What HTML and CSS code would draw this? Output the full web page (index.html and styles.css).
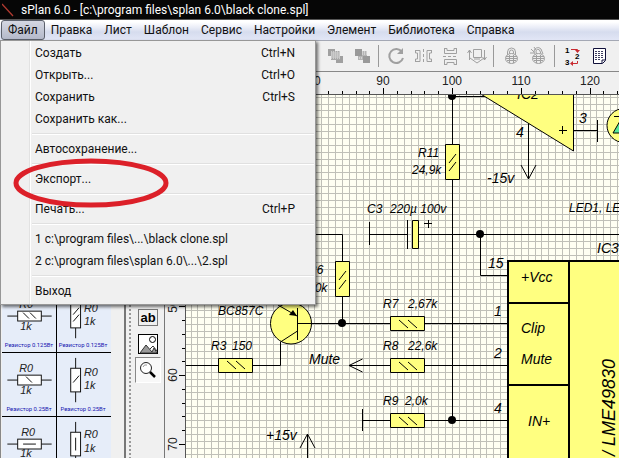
FILE: index.html
```html
<!DOCTYPE html>
<html lang="ru">
<head>
<meta charset="utf-8">
<title>sPlan 6.0</title>
<link rel="stylesheet" href="styles.css">
</head>
<body>
<header class="titlebar">
  <svg class="app-icon" width="16" height="18" viewBox="0 0 16 18"><path d="M0 3L11 15" stroke="#b03a30" stroke-width="1.3"/></svg>
  <span>sPlan 6.0 - [c:\program files\splan 6.0\black clone.spl]</span>
</header>
<nav class="menubar">
  <button class="menu-title open">Файл</button>
  <button class="menu-title">Правка</button>
  <button class="menu-title">Лист</button>
  <button class="menu-title">Шаблон</button>
  <button class="menu-title">Сервис</button>
  <button class="menu-title">Настройки</button>
  <button class="menu-title">Элемент</button>
  <button class="menu-title">Библиотека</button>
  <button class="menu-title">Справка</button>

  <div class="dropdown">
    <button class="item"><span>Создать</span><span class="key">Ctrl+N</span></button>
    <button class="item"><span>Открыть...</span><span class="key">Ctrl+O</span></button>
    <button class="item"><span>Сохранить</span><span class="key">Ctrl+S</span></button>
    <button class="item"><span>Сохранить как...</span></button>
    <hr>
    <button class="item"><span>Автосохранение...</span></button>
    <hr>
    <button class="item"><span>Экспорт...</span></button>
    <hr>
    <button class="item"><span>Печать...</span><span class="key">Ctrl+P</span></button>
    <hr>
    <button class="item"><span>1 c:\program files\...\black clone.spl</span></button>
    <button class="item"><span>2 c:\program files\splan 6.0\...\2.spl</span></button>
    <hr>
    <button class="item"><span>Выход</span></button>
    <svg class="marker" width="156" height="50" viewBox="0 0 156 50"><ellipse cx="78" cy="25" rx="75" ry="22" fill="none" stroke="#dc2029" stroke-width="5"/></svg>
  </div>
</nav>

<div class="toolbar">
  <button class="tool" aria-label="На передний план"><svg width="20" height="20" viewBox="0 0 20 20"><path d="M3 3h7v7H3zM11 10h7v7h-7z" fill="#a0a0a0"/><path d="M6 5h9v9H6z" fill="#a8a8a8"/><path d="M6 6h9M6 8h9M6 10h9M6 12h9" stroke="#eee" stroke-dasharray="1 1"/><path d="M6 7h9M6 9h9M6 11h9" stroke="#eee" stroke-dasharray="1 1" stroke-dashoffset="1" opacity=".6"/></svg></button>
  <button class="tool" aria-label="На задний план"><svg width="20" height="20" viewBox="0 0 20 20"><path d="M6 5h9v9H6z" fill="#b4b4b4"/><path d="M7 12h4M10 6h5M10 8h5" stroke="#eee" stroke-dasharray="1 1"/><path d="M3 3h7v7H3zM11 10h7v7h-7z" fill="#999"/></svg></button>
  <i class="sep"></i>
  <button class="tool" aria-label="Повернуть"><svg width="20" height="20" viewBox="0 0 20 20" fill="none" stroke="#a0a0a0" stroke-width="2"><path d="M16 6A7 7 0 1 0 17 12"/><path d="M17 2v6h-6z" fill="#a0a0a0" stroke="none"/></svg></button>
  <button class="tool" aria-label="Отразить по горизонтали"><svg width="20" height="20" viewBox="0 0 20 20" fill="none" stroke="#a0a0a0"><path d="M10.500 3v14" stroke-dasharray="3 2"/><path d="M2 4.500h5v11H2M2.500 4v3h2v6h-2v3M19 4.500h-5v11h5M18.500 4v3h-2v6h2v3"/></svg></button>
  <button class="tool" aria-label="Отразить по вертикали"><svg width="20" height="20" viewBox="0 0 20 20" fill="none" stroke="#a0a0a0"><path d="M3 10.500h15" stroke-dasharray="3 2"/><path d="M4.500 2v5.500h12V2M4 2.500h3v2h7v-2h3M4.500 19v-5.500h12V19M4 18.500h3v-2h7v2h3"/></svg></button>
  <button class="tool" aria-label="Выровнять"><svg width="20" height="20" viewBox="0 0 20 20" fill="none" stroke="#a0a0a0"><path d="M6.500 3.500h8v8h-8z"/><path d="M2.500 14V4M.5 7l2-3 2 3M17.500 4v10M15.500 11l2 3 2-3M3 12l7 5 7-5M7 13h6"/></svg></button>
  <i class="sep"></i>
  <button class="tool" aria-label="Закрепить"><svg width="20" height="20" viewBox="0 0 20 20" fill="none" stroke="#a0a0a0"><path d="M6.500 9V6a4 4 0 0 1 8 0v3M8.500 9V6a2 2 0 0 1 4 0v3"/><ellipse cx="10.500" cy="12.500" rx="6" ry="5" fill="#eee"/><path d="M5 10.500h11M5 12.500h11M6 14.500h9M8.500 9v8M12.500 9v8"/></svg></button>
  <button class="tool" aria-label="Открепить"><svg width="20" height="20" viewBox="0 0 20 20" fill="none" stroke="#a0a0a0"><path d="M7.500 9L6 6a4 4 0 0 1 7-3l2 5M9 9L8 6a2 2 0 0 1 4-1l1 3M3 3l3 3M2 7h4M6 1l2 3"/><ellipse cx="10.500" cy="12.500" rx="6" ry="5" fill="#eee"/><path d="M5 10.500h11M5 12.500h11M6 14.500h9M8.500 9v8M12.500 9v8"/></svg></button>
  <i class="sep"></i>
  <button class="tool" aria-label="Нумерация"><svg class="numbering" width="20" height="20" viewBox="0 0 20 20" fill="none"><path d="M9 3.500h6.500V6M15.500 15v2.500H10" stroke="#c82a30"/><path d="M13 4h5l-2.500 3zM11 15v5l-3-2.500z" fill="#c82a30"/><text x="3" y="7" class="digit">1</text><text x="13" y="13" class="digit">2</text><text x="3" y="19" class="digit">3</text></svg></button>
  <button class="tool" aria-label="Спецификация"><svg width="20" height="20" viewBox="0 0 20 20" fill="none" stroke="#10103a"><path d="M4.500 2.500h12v12l-3 3h-9z" fill="#fff"/><path d="M6 5.500h9M6 7.500h9M6 9.500h9M6 11.500h9M6 13.500h6" stroke-dasharray="2 1" opacity=".8"/><path d="M13 17v-3h3"/></svg></button>
</div>

<main class="workspace">
  <aside class="library">
    <div class="blank-rows"></div>
    <svg class="part left" viewBox="0 0 54 64"><path d="M5 27.500h45"/><rect x="15.500" y="22.500" width="24" height="10"/><path d="M21 24l6 6M28 24l6 6"/><text x="17" y="19">R0</text><text x="18" y="42">1k</text><text class="caption" x="27" y="59">Резистор 0.125Вт</text></svg>
    <svg class="part" viewBox="0 0 54 64"><path d="M18.500 5v45"/><rect x="13.500" y="15.500" width="10" height="24"/><path d="M16 26l6-7M16 33l6-7"/><text x="27" y="23">R0</text><text x="27" y="37">1k</text><text class="caption" x="26" y="59">Резистор 0.125Вт</text></svg>
    <svg class="part left" viewBox="0 0 54 64"><path d="M5 27.500h45"/><rect x="15.500" y="22.500" width="24" height="10"/><path d="M24 24l6 6"/><text x="17" y="19">R0</text><text x="18" y="42">1k</text><text class="caption" x="27" y="59">Резистор 0.25Вт</text></svg>
    <svg class="part" viewBox="0 0 54 64"><path d="M18.500 5v45"/><rect x="13.500" y="15.500" width="10" height="24"/><path d="M16 30l6-7"/><text x="27" y="23">R0</text><text x="27" y="37">1k</text><text class="caption" x="26" y="59">Резистор 0.25Вт</text></svg>
    <svg class="part left" viewBox="0 0 54 64"><path d="M5 27.500h45"/><rect x="15.500" y="22.500" width="24" height="10"/><path d="M21 27.500h13"/><text x="19" y="19">R0</text><text x="18" y="41">1k</text></svg>
    <svg class="part" viewBox="0 0 54 64"><path d="M18.500 5v59"/><rect x="13.500" y="15.500" width="10" height="24"/><path d="M18.500 21v13"/><text x="27" y="21">R0</text><text x="27" y="36">1k</text></svg>
  </aside>
  <div class="palette">
    <button class="ptool first" aria-label="Текст"><svg width="20" height="18" viewBox="0 0 20 18"><rect x=".5" y=".5" width="19" height="16" fill="none" stroke="#000" stroke-dasharray="1 1"/><text x="10" y="13" class="ab">ab</text></svg></button>
    <button class="ptool" aria-label="Рисунок"><svg width="20" height="20" viewBox="0 0 20 20"><rect x=".5" y=".5" width="19" height="19" fill="#fff" stroke="#000"/><circle cx="14.500" cy="5.500" r="3" fill="#fff" stroke="#000"/><path d="M2 19l6-8 6 7 2-4 3 5z" fill="#999" stroke="#333"/><path d="M12 15l3-3 4 5" fill="none" stroke="#333"/></svg></button>
    <button class="ptool pressed" aria-label="Лупа"><svg width="20" height="20" viewBox="0 0 20 20"><circle cx="8" cy="8" r="5.500" fill="#fff" stroke="#222"/><path d="M5 7q1-3 4-2" stroke="#999" fill="none"/><path d="M12 12l5 5" stroke="#000" stroke-width="2.500"/></svg></button>
  </div>
  <div class="sheet">
    <svg class="ruler-top" id="rulerTop"></svg>
    <svg class="ruler-left" id="rulerLeft"></svg>
    <svg class="canvas">
      <g id="grid"></g>
      <g class="schematic" transform="translate(-186 -95)">
        <path class="wire" d="M452.500 90v330.500M452 96.500h33M528.500 123v56M521 165l7.500 14 7.500-14M573 130.500h24M597.500 120v22M315 234.500h27.500v89M369.500 222v23M369 234.500h38M407.500 220v29M418 234.500h240M480.500 234v41.500h27M297 323.500h210M349 365.500h158M362.500 359l-13.500 6.500 13.500 6.500M362 420.500h145M362.500 409v22M186 365.500h94.500V342M307.500 434v60M300 448l7.500-14 7.500 14M424 223.500h8M428.500 220v8"/>
        <path class="body" d="M484 96L470 88h103.500v63z"/>
        <path class="wire" d="M559 130.500h8M562.500 126v8"/>
        <circle class="body" cx="624" cy="125.500" r="17"/><path d="M613 133l7-12v12z" fill="#58e89a" stroke="#000"/><path class="wire" d="M614 116.500h8"/>
        <path class="body" d="M445.500 144.500h14v35h-14zM335.500 261.500h14v35h-14zM412.500 220.500h6v28h-6zM390.500 316.500h34v14h-34zM390.500 358.500h34v14h-34zM390.500 413.500h34v14h-34zM218.500 358.500h34v14h-34z"/>
        <path class="mark" d="M449 163l7-9M449 171l7-9M339 280l7-9M339 289l7-9M399 320l9 8M408 320l9 8M399 362l9 8M408 362l9 8M399 417l9 8M408 417l9 8M227 361l9 8M236 361l9 8"/>
        <circle class="body" cx="291" cy="323.500" r="20.500"/>
        <path class="wire" d="M297.500 308v32M297 323.500h45M278 305l19 11M280.500 342l17-11"/><path d="M297 316l-8-1 4-5z"/>
        <circle cx="452" cy="96" r="4"/><circle cx="480" cy="234" r="4"/><circle cx="342" cy="323" r="4"/><circle cx="452" cy="420" r="4"/>
        <path class="chip" d="M508 261h160v240H508zM569 261v240M508 303h61M508 385h61"/>
        <g class="small">
          <text x="418" y="157">R11</text><text x="412" y="174">24,9k</text>
          <text x="367" y="213">C3</text><text x="390" y="213">220µ 100v</text>
          <text x="308" y="274">R6</text><text x="308" y="292">10k</text>
          <text x="383" y="308">R7</text><text x="408" y="308">2,67k</text>
          <text x="383" y="350">R8</text><text x="408" y="350">22,6k</text>
          <text x="383" y="405">R9</text><text x="405" y="405">2,0k</text>
          <text x="218" y="315">BC857C</text><text x="211" y="350">R3</text><text x="232" y="350">150</text>
          <text x="569" y="212">LED1, LED2</text>
        </g>
        <g class="large">
          <text x="517" y="99">IC2</text><text x="516" y="137">4</text><text x="579" y="123">3</text><text x="487" y="183">-15v</text>
          <text x="597" y="253">IC3</text><text x="488" y="268">15</text><text x="494" y="316">1</text><text x="494" y="358">2</text><text x="494" y="413">4</text>
          <text x="521" y="282">+Vcc</text><text x="521" y="333">Clip</text><text x="521" y="364">Mute</text><text x="528" y="426">IN+</text>
          <text x="309" y="364">Mute</text><text x="266" y="440">+15v</text>
        </g>
        <text class="chip-name" transform="translate(615 456) rotate(-90)">/ LME49830</text>
      </g>
    </svg>
  </div>
</main>
<script src="script.js"></script>
</body>
</html>
```
FILE: styles.css
```css
* { box-sizing: border-box; }
html, body { height: 100%; margin: 0; }
body {
  display: flex;
  flex-direction: column;
  overflow: hidden;
  background: #f0f0f0;
  color: #111;
  font: 12px/16px Roboto, "Noto Sans", sans-serif;
}
button {
  margin: 0;
  padding: 0;
  border: 0;
  background: none;
  color: inherit;
  font: inherit;
}
svg { display: block; }

.titlebar {
  display: flex;
  align-items: center;
  flex: none;
  height: 20px;
  padding-left: 2px;
  gap: 3px;
  border-bottom: 1px solid #555;
  background: #060606;
  color: #fff;
  white-space: nowrap;
}

.menubar {
  position: relative;
  z-index: 2;
  display: flex;
  flex: none;
  height: 21px;
  padding-left: 1px;
  border-bottom: 1px solid #a4a8b4;
  background: linear-gradient(#fff 10%, #e8ebf6 40%, #d6dcee 60%, #e2e6f6);
}
.menu-title { padding: 0 6px; border: 1px solid transparent; border-width: 1px 0; white-space: nowrap; }
.menu-title.open {
  padding: 0 6px;
  border: 1px solid #5c616c;
  border-radius: 3px;
  background: linear-gradient(#d4d7e2, #b4b9ca);
}

.dropdown {
  position: absolute;
  top: 20px;
  left: 0;
  width: 316px;
  padding: 1px 1px 2px;
  border: 1px solid #979797;
  background: linear-gradient(90deg, #f0f0f0 28px, #e2e2e2 28px, #e2e2e2 29px, #fff 29px, #fff 30px, #f0f0f0 30px);
  box-shadow: 2px 2px 3px rgba(0, 0, 0, .55);
}
.item {
  display: flex;
  justify-content: space-between;
  align-items: center;
  width: 100%;
  height: 22px;
  padding: 0 19px 0 33px;
  white-space: nowrap;
}
.dropdown hr {
  height: 2px;
  margin: 3px 0 3px 30px;
  border: 0;
  border-top: 1px solid #e0e0e0;
  background: #fff;
}
.marker { position: absolute; top: 117px; left: 12px; }

.toolbar {
  display: flex;
  align-items: center;
  flex: none;
  height: 31px;
  padding-left: 321px;
  border-bottom: 1px solid #888;
  background: #f0f0f0;
}
.tool { display: flex; justify-content: center; align-items: center; width: 27px; height: 24px; }
.sep { flex: none; width: 1px; height: 22px; margin: 0 3px; background: #999; }
.numbering { overflow: visible; }
.digit { fill: #000; font: bold 8px "Liberation Sans", sans-serif; }

.workspace { display: flex; flex: 1; min-height: 0; overflow: hidden; }
.library {
  display: grid;
  grid-template-columns: 55px 54px;
  grid-auto-rows: 64px;
  flex: none;
  width: 126px;
  padding: 25px 0 0 1px;
  border-left: 1px solid #888;
  border-right: 2px solid #777;
  overflow: hidden;
}
.blank-rows { grid-row: span 3; grid-column: 1 / -1; background: #e6edf9; }
.part {
  width: 100%;
  height: 64px;
  border-bottom: 1px solid #000;
  background: #e6edf9;
  fill: none;
  stroke: #111;
}
.part.left { border-right: 1px solid #000; }
.part rect { fill: #fff; }
.part text { fill: #222; stroke: none; font: italic 11px "Liberation Sans", sans-serif; }
.part .caption { fill: #1414b0; font: 6px Roboto, sans-serif; text-anchor: middle; }

.palette {
  display: flex;
  flex-direction: column;
  flex: none;
  width: 39px;
  padding-left: 9px;
  border-right: 1px solid #777;
  background: radial-gradient(circle, #999 0, #999 1px, transparent 1px) 2px 0 / 4px 4px repeat-y, #f0f0f0;
}
.ptool { display: flex; justify-content: center; align-items: center; width: 26px; height: 26px; }
.ptool.first { margin-top: 233px; }
.ptool.pressed { border: 1px solid; border-color: #888 #fff #fff #888; background: #f8f8f8; }
.ab { font: bold 13px "Liberation Sans", sans-serif; text-anchor: middle; }

.sheet {
  display: grid;
  grid-template: 23px minmax(0, 1fr) / 21px minmax(0, 1fr);
  flex: 1;
  min-width: 0;
}
.ruler-top { grid-column: 2; width: 100%; height: 100%; border-bottom: 1px solid #555; }
.ruler-left { grid-row: 2; width: 100%; height: 100%; border-right: 1px solid #555; }
.ruler-top, .ruler-left { fill: #222; stroke: none; font: 12px "Liberation Sans", sans-serif; text-anchor: middle; overflow: hidden; }
.canvas { grid-row: 2; grid-column: 2; width: 100%; height: 100%; background: #fffff2; }
.grid-line { fill: #c0c0b8; }
.tick { fill: #000; }
.wire, .mark { fill: none; stroke: #000; }
.body { fill: #ffff80; stroke: #000; }
.chip { fill: #ffff80; stroke: #000; stroke-width: 2; }
.schematic text { fill: #000; font-family: "Liberation Sans", sans-serif; font-style: italic; }
.small { font-size: 12px; }
.large { font-size: 14px; }
.chip-name { font-size: 18px; }
```
FILE: script.js
```js
// One drawing unit in pixels, and the sheet position where each axis reads a known value.
const UNIT = 6.88;
const ORIGIN_X = 266 - 100 * UNIT;
const ORIGIN_Y = 349 - 70 * UNIT;
const GRID_Y = 325;

// First labels that lie clear of the open menu.
const FIRST_LABEL_X = 80;
const FIRST_LABEL_Y = 50;

function add(parent, name, attrs, text) {
  const node = document.createElementNS("http://www.w3.org/2000/svg", name);
  for (const key in attrs) node.setAttribute(key, attrs[key]);
  if (text !== undefined) node.textContent = text;
  parent.appendChild(node);
}

const grid = document.getElementById("grid");
const rulerTop = document.getElementById("rulerTop");
const rulerLeft = document.getElementById("rulerLeft");
const width = rulerTop.getBoundingClientRect().width;
const height = rulerLeft.getBoundingClientRect().height;

for (let i = 60; ORIGIN_X + i * UNIT < width; i++) {
  const x = Math.round(ORIGIN_X + i * UNIT);
  add(grid, "rect", { class: "grid-line", x, y: 0, width: 1, height: "100%" });
  if (i % 2 === 0) {
    const size = i % 10 === 0 ? 6 : 3;
    add(rulerTop, "rect", { class: "tick", x, y: 22 - size, width: 1, height: size });
  }
  if (i % 10 === 0 && i >= FIRST_LABEL_X) add(rulerTop, "text", { x, y: 13 }, i);
}

for (let y = GRID_Y % UNIT; y < height; y += UNIT) {
  add(grid, "rect", { class: "grid-line", x: 0, y: Math.round(y), width: "100%", height: 1 });
}

for (let i = 20; ORIGIN_Y + i * UNIT < height; i += 2) {
  const y = Math.round(ORIGIN_Y + i * UNIT);
  const size = i % 10 === 0 ? 6 : 3;
  add(rulerLeft, "rect", { class: "tick", x: 20 - size, y, width: size, height: 1 });
  if (i % 10 === 0 && i >= FIRST_LABEL_Y) add(rulerLeft, "text", { transform: `translate(12 ${y}) rotate(-90)` }, i);
}
```
